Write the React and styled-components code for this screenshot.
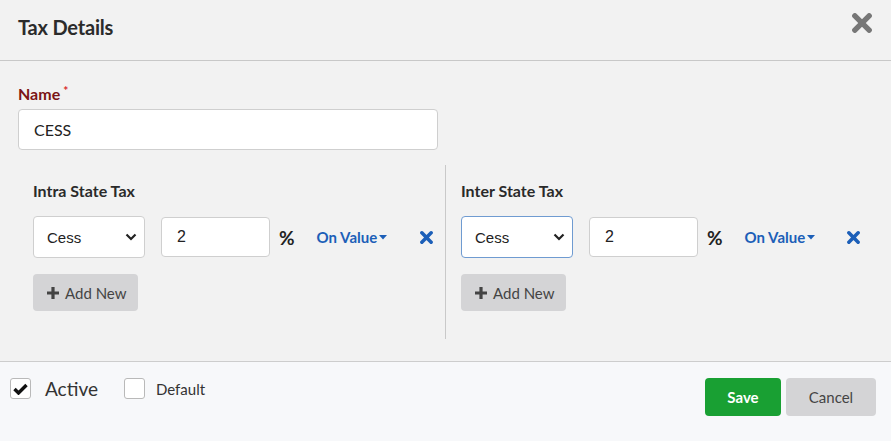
import React from 'react';
import styled, { createGlobalStyle } from 'styled-components';

const Global = createGlobalStyle`
  html, body { margin: 0; padding: 0; }
  *, *::before, *::after { box-sizing: border-box; }
  body {
    font-family: 'Lato', 'Liberation Sans', sans-serif;
    background: #f2f2f2;
    color: #333;
  }
`;

const Modal = styled.div`
  width: 891px;
  height: 441px;
  display: flex;
  flex-direction: column;
  background: #f2f2f2;
`;

const Header = styled.div`
  height: 61px;
  flex-shrink: 0;
  display: flex;
  align-items: center;
  justify-content: space-between;
  padding: 0 19px 6px 18px;
  border-bottom: 1px solid #c8c8c8;
  h2 {
    margin: 0;
    font-size: 20px;
    font-weight: 700;
    color: #2b2b2b;
    letter-spacing: -0.2px;
  }
`;

const CloseBtn = styled.span`
  display: flex;
  margin-top: -8px;
  color: #777;
`;

const Body = styled.div`
  flex: 1;
  padding: 22px 18px 0;
`;

const Label = styled.label`
  display: block;
  font-size: 16px;
  font-weight: 700;
  color: #7b1416;
  margin-bottom: 6px;
  sup {
    color: #d9292b;
    font-size: 12px;
    margin-left: 3px;
    vertical-align: 5px;
  }
`;

const TextInput = styled.input`
  width: ${p => p.$w || 420}px;
  height: ${p => p.$h || 41}px;
  border: 1px solid #cfcfcf;
  border-radius: 4px;
  background: #fff;
  padding: 0 15px;
  font-family: ${p => (p.$arial ? "'Liberation Sans', Arial" : "'Lato'")}, sans-serif;
  font-size: 16px;
  color: #222;
  outline: none;
`;

const Sections = styled.div`
  display: grid;
  grid-template-columns: 427px 427px;
  margin-top: 15px;
`;

const Section = styled.div`
  padding: 17px 15px 28px;
  border-left: ${p => (p.$divider ? '1px solid #c9c9c9' : 'none')};
  h3 {
    margin: 0 0 16px;
    font-size: 16px;
    font-weight: 700;
    color: #2a2a2a;
    line-height: 18px;
  }
`;

const TaxRow = styled.div`
  display: flex;
  align-items: center;
  height: 42px;
`;

const SelectBox = styled.div`
  width: 112px;
  height: 42px;
  border: 1px solid ${p => (p.$focus ? '#6f9bd1' : '#cfcfcf')};
  border-radius: 4px;
  background: #fff;
  display: flex;
  align-items: center;
  justify-content: space-between;
  padding: 0 7px 0 13px;
  font-family: 'Liberation Sans', Arial, sans-serif;
  font-size: 15px;
  color: #222;
`;

const Percent = styled.span`
  margin-left: 9px;
  font-size: 19px;
  font-weight: 700;
  color: #222;
`;

const OnValue = styled.span`
  margin-left: 22px;
  display: flex;
  align-items: center;
  color: #1c5fb8;
  font-weight: 700;
  font-size: 15px;
  svg { margin-left: 2px; }
`;

const RemoveBtn = styled.span`
  margin-left: auto;
  margin-right: -3px;
  display: flex;
  color: #1c5fb8;
`;

const AddButton = styled.button`
  margin-top: 16px;
  height: 37px;
  padding: 0 12px 0 13px;
  border: none;
  border-radius: 4px;
  background: #d4d4d6;
  color: #444;
  font-family: 'Lato', sans-serif;
  font-size: 15px;
  display: flex;
  align-items: center;
  gap: 5px;
`;

const Footer = styled.div`
  height: 80px;
  flex-shrink: 0;
  border-top: 1px solid #cdcdcd;
  background: #f7f8fa;
  display: flex;
  align-items: flex-start;
  justify-content: space-between;
  padding: 16px 15px 0 10px;
`;

const Checks = styled.div`
  display: flex;
  align-items: center;
`;

const Check = styled.label`
  display: flex;
  align-items: center;
  margin-right: 26px;
  height: 21px;
  span.text {
    margin-left: ${p => (p.$big ? 14 : 11)}px;
    font-size: ${p => (p.$big ? 19 : 15)}px;
    color: #333;
  }
`;

const Box = styled.span`
  width: 21px;
  height: 21px;
  border: 1px solid #b9b9b9;
  border-radius: 3px;
  background: #fff;
  display: flex;
  align-items: center;
  justify-content: center;
`;

const Actions = styled.div`
  display: flex;
  gap: 5px;
`;

const ActionButton = styled.button`
  height: 38px;
  width: ${p => p.$w}px;
  border: none;
  border-radius: 4px;
  font-family: 'Lato', sans-serif;
  font-size: 15px;
  font-weight: ${p => (p.$primary ? 700 : 400)};
  background: ${p => (p.$primary ? '#19a033' : '#d4d4d6')};
  color: ${p => (p.$primary ? '#fff' : '#444')};
`;

const XIcon = ({ size = 14, color = 'currentColor' }) => (
  <svg width={size} height={size} viewBox="0 0 14 14">
    <path d="M2 2 L12 12 M12 2 L2 12" stroke={color} strokeWidth="3.8" strokeLinecap="round" />
  </svg>
);

const Chevron = () => (
  <svg width="12" height="8" viewBox="0 0 12 8">
    <path d="M1.5 1.5 L6 6 L10.5 1.5" stroke="#222" strokeWidth="2.2" fill="none" />
  </svg>
);

const Caret = () => (
  <svg width="8" height="5" viewBox="0 0 8 5">
    <path d="M0 0 H8 L4 4.5 Z" fill="#1c5fb8" />
  </svg>
);

const Plus = () => (
  <svg width="14" height="14" viewBox="0 0 14 14">
    <path d="M7 1 V13 M1 7 H13" stroke="#444" strokeWidth="3.2" />
  </svg>
);

const Tick = () => (
  <svg width="15" height="12" viewBox="0 0 15 12">
    <path d="M1.5 6 L5.5 10 L13.5 2" stroke="#111" strokeWidth="3.4" fill="none" />
  </svg>
);

const TaxSection = ({ title, divider, focus }) => (
  <Section $divider={divider}>
    <h3>{title}</h3>
    <TaxRow>
      <SelectBox $focus={focus}>
        Cess <Chevron />
      </SelectBox>
      <TextInput $w={109} $h={40} $arial defaultValue="2" style={{ marginLeft: 16 }} />
      <Percent>%</Percent>
      <OnValue>On Value<Caret /></OnValue>
      <RemoveBtn><XIcon size={13} /></RemoveBtn>
    </TaxRow>
    <AddButton><Plus />Add New</AddButton>
  </Section>
);

export default function App() {
  return (
    <Modal>
      <Global />
      <Header>
        <h2>Tax Details</h2>
        <CloseBtn><XIcon size={20} color="#777" /></CloseBtn>
      </Header>
      <Body>
        <Label>Name<sup>*</sup></Label>
        <TextInput defaultValue="CESS" />
        <Sections>
          <TaxSection title="Intra State Tax" />
          <TaxSection title="Inter State Tax" divider focus />
        </Sections>
      </Body>
      <Footer>
        <Checks>
          <Check $big>
            <Box><Tick /></Box>
            <span className="text">Active</span>
          </Check>
          <Check>
            <Box />
            <span className="text">Default</span>
          </Check>
        </Checks>
        <Actions>
          <ActionButton $primary $w={76}>Save</ActionButton>
          <ActionButton $w={90}>Cancel</ActionButton>
        </Actions>
      </Footer>
    </Modal>
  );
}
